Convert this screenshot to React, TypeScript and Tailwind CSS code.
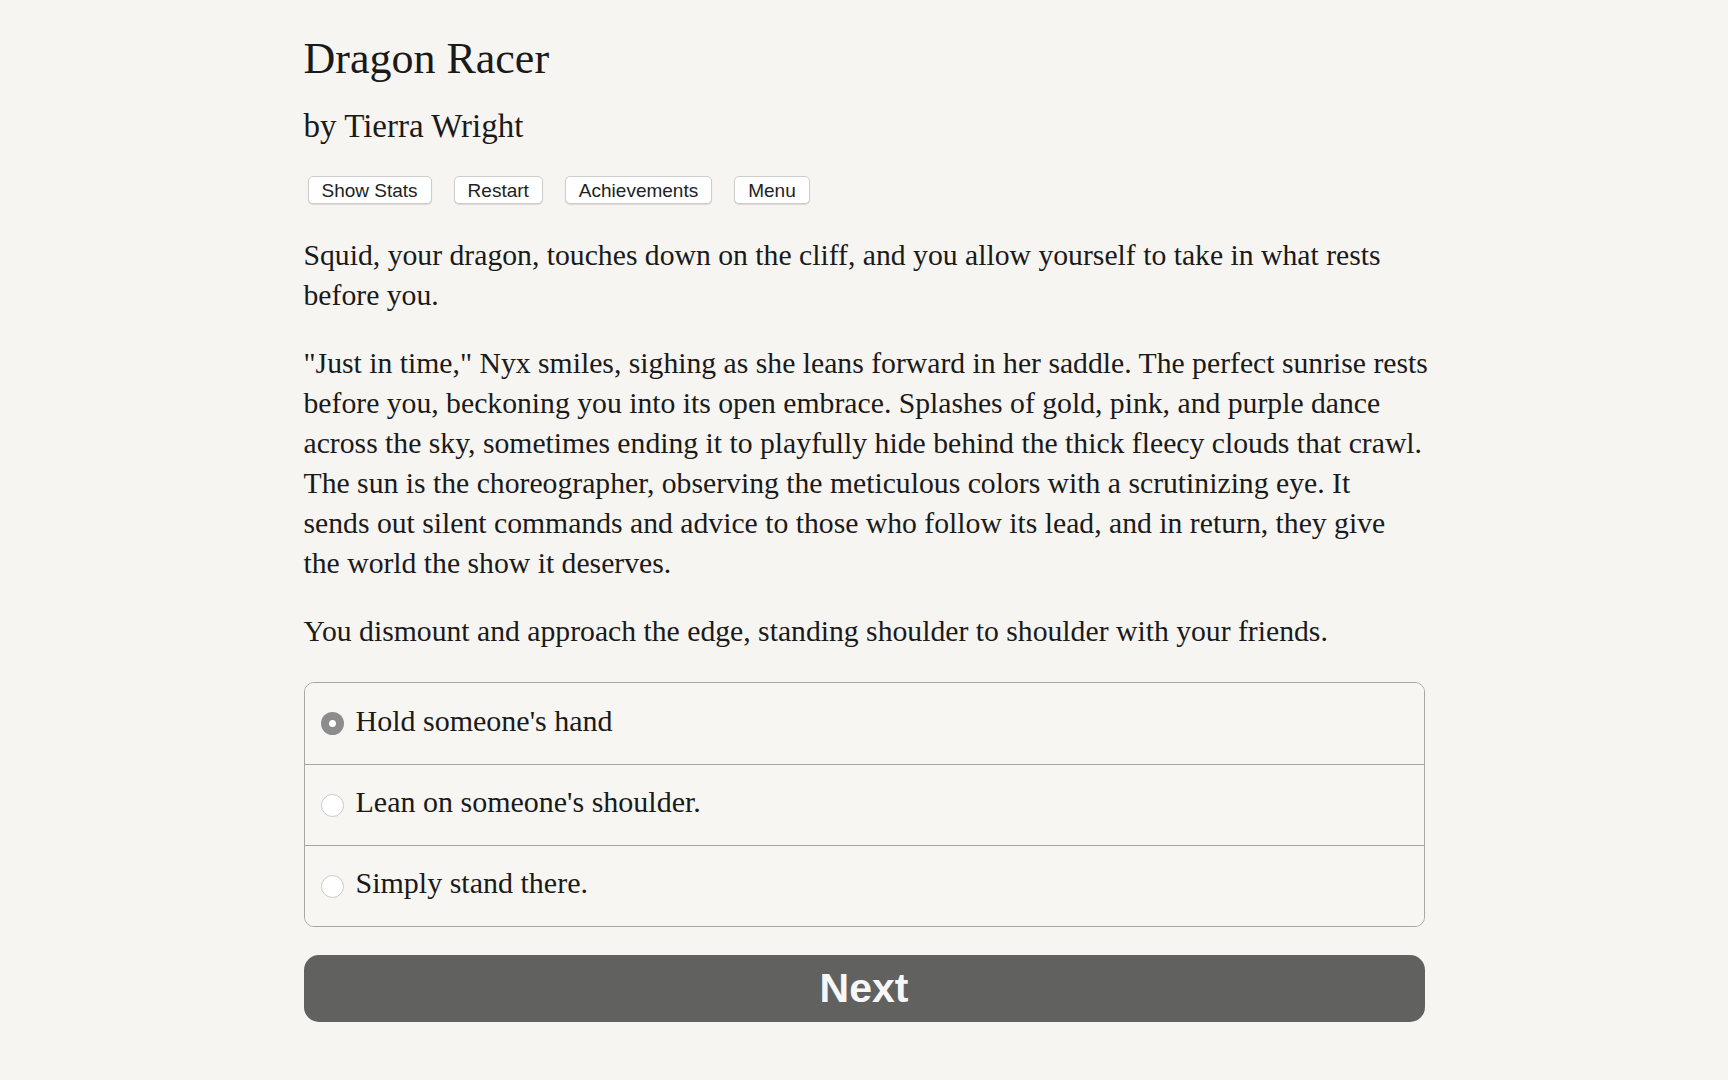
import { Fragment, useState } from "react"

const CHOICES = [
  "Hold someone's hand",
  "Lean on someone's shoulder.",
  "Simply stand there.",
]

// line breaks follow the original page
const PARAGRAPHS = [
  [
    "Squid, your dragon, touches down on the cliff, and you allow yourself to take in what rests",
    "before you.",
  ],
  [
    "\"Just in time,\" Nyx smiles, sighing as she leans forward in her saddle. The perfect sunrise rests",
    "before you, beckoning you into its open embrace. Splashes of gold, pink, and purple dance",
    "across the sky, sometimes ending it to playfully hide behind the thick fleecy clouds that crawl.",
    "The sun is the choreographer, observing the meticulous colors with a scrutinizing eye. It",
    "sends out silent commands and advice to those who follow its lead, and in return, they give",
    "the world the show it deserves.",
  ],
  ["You dismount and approach the edge, standing shoulder to shoulder with your friends."],
]

const SERIF = "font-['Liberation_Serif',_'Times_New_Roman',_serif]"

function TopButton({ label }: { label: string }) {
  return (
    <button className="h-[28px] px-[13px] rounded-[5px] border border-[#cfcdca] bg-white text-[19px] leading-none text-[#222] shadow-[0_1px_1px_rgba(0,0,0,0.12)] font-['Liberation_Sans',_Arial,_sans-serif]">
      {label}
    </button>
  )
}

function Radio({ checked }: { checked: boolean }) {
  if (checked) {
    return (
      <span className="flex items-center justify-center w-[23px] h-[23px] rounded-full bg-[#8c8c8c] shrink-0">
        <span className="w-[7px] h-[7px] rounded-full bg-white" />
      </span>
    )
  }
  return <span className="w-[23px] h-[23px] rounded-full border border-[#c9c9c9] bg-white shrink-0" />
}

export default function App() {
  const [selected, setSelected] = useState(0)

  return (
    <div className={`min-h-screen bg-[#f7f5f2] text-[#1a1a1a] ${SERIF}`}>
      <div className="w-[1121px] mx-auto pt-[32px] pb-[40px]">
        <h1 className="text-[44px] leading-[53px]">Dragon Racer</h1>
        <h2 className="mt-[21px] text-[33px] leading-[40px]">by Tierra Wright</h2>

        <div className="mt-[30px] ml-[4px] flex gap-[22px]">
          <TopButton label="Show Stats" />
          <TopButton label="Restart" />
          <TopButton label="Achievements" />
          <TopButton label="Menu" />
        </div>

        <div className="mt-[31px] text-[29.7px] leading-[40px] space-y-[28px]">
          {PARAGRAPHS.map((lines, p) => (
            <p key={p} className="whitespace-nowrap">
              {lines.map((l, i) => (
                <Fragment key={i}>
                  {i > 0 && <br />}
                  {l}
                </Fragment>
              ))}
            </p>
          ))}
        </div>

        <div className="mt-[31px] border border-[#a9a7a4] rounded-[10px] overflow-hidden">
          {CHOICES.map((c, i) => (
            <label
              key={c}
              onClick={() => setSelected(i)}
              className={`flex items-center h-[81px] pl-[16px] gap-[12px] cursor-pointer bg-[#f8f6f3] ${i > 0 ? "border-t border-[#a9a7a4]" : ""}`}
            >
              <Radio checked={selected === i} />
              <span className="text-[30px] leading-[40px] -mt-[6px]">{c}</span>
            </label>
          ))}
        </div>

        <button className="mt-[28px] w-[1121px] h-[67px] rounded-[15px] bg-[#616160] text-[#f7f7f7] text-[41px] font-bold font-['Liberation_Sans',_Arial,_sans-serif]">
          Next
        </button>
      </div>
    </div>
  )
}
